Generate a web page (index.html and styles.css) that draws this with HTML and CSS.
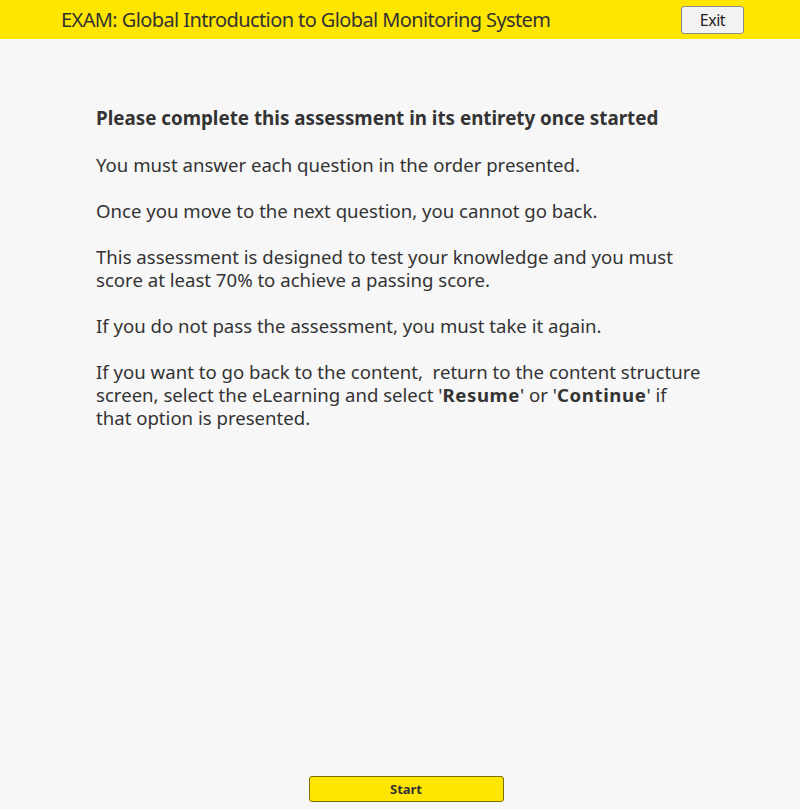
FILE: index.html
```html
<!DOCTYPE html>
<html>
<head>
<meta charset="utf-8">
<link rel="stylesheet" href="styles.css">
</head>
<body>
<header class="topbar">
  <div class="title">EXAM: Global Introduction to Global Monitoring System</div>
  <button class="exit">Exit</button>
</header>
<main class="content">
  <p class="lead">Please complete this assessment in its entirety once started</p>
  <p>You must answer each question in the order presented.</p>
  <p>Once you move to the next question, you cannot go back.</p>
  <p>This assessment is designed to test your knowledge and you must score at least 70% to achieve a passing score.</p>
  <p>If you do not pass the assessment, you must take it again.</p>
  <p>If you want to go back to the content,&nbsp; return to the content structure screen, select the eLearning and select '<b>Resume</b>' or '<b>Continue</b>' if that option is presented.</p>
</main>
<footer class="footer">
  <button class="start">Start</button>
</footer>
</body>
</html>
```
FILE: styles.css
```css
html, body { margin: 0; padding: 0; }
body {
  background: #f7f7f7;
  font-family: "Noto Sans", "Open Sans", sans-serif;
  color: #333;
  height: 809px;
  display: flex;
  flex-direction: column;
}
.topbar {
  background: #ffe600;
  height: 39px;
  display: flex;
  align-items: center;
  justify-content: space-between;
  padding: 0 56px 0 61px;
  box-sizing: border-box;
}
.title {
  font-size: 20px;
  color: #333;
  letter-spacing: -0.6px;
}
.exit {
  width: 63px;
  height: 28px;
  background: #f2f2f2;
  border: 1px solid #8c8c8c;
  border-radius: 3px;
  font-family: "Noto Sans", sans-serif;
  font-size: 16px;
  letter-spacing: -0.5px;
  color: #222;
  padding: 0;
}
.content {
  flex: 1;
  padding: 68px 0 0 96px;
  width: 606px;
}
.content p {
  margin: 0 0 23px;
  font-size: 18.6px;
  line-height: 23px;
}
.content p b { letter-spacing: 0.6px; }
.content p.lead { font-weight: bold; font-size: 18.8px; margin-bottom: 23px; }
.footer {
  display: flex;
  justify-content: center;
  padding: 0 0 7px 12px;
}
.start {
  width: 195px;
  height: 26px;
  background: #ffe600;
  border: 1px solid #7a6d00;
  border-radius: 3px;
  font-family: "Noto Sans", sans-serif;
  font-weight: bold;
  font-size: 13px;
  color: #333;
  padding: 0;
}
```
